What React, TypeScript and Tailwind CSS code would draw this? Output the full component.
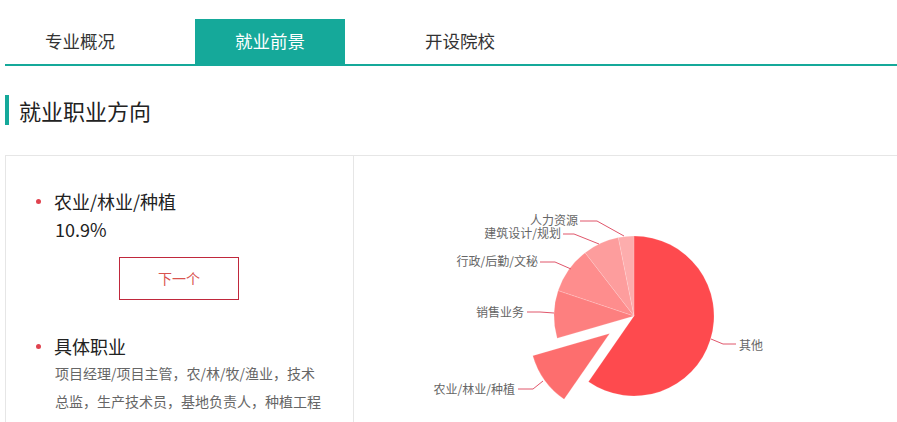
import React from "react";

const font = { fontFamily: '"Microsoft YaHei", "Noto Sans CJK SC", "Noto Sans", sans-serif' };

// pie center / radius in page coords
const CX = 634;
const CY = 316;
const R = 80;

const pt = (deg: number, r: number, ox = 0, oy = 0) => {
  const a = (deg * Math.PI) / 180;
  return [CX + ox + r * Math.sin(a), CY + oy - r * Math.cos(a)];
};

const slicePath = (from: number, to: number, ox = 0, oy = 0) => {
  const [x1, y1] = pt(from, R, ox, oy);
  const [x2, y2] = pt(to, R, ox, oy);
  const large = to - from > 180 ? 1 : 0;
  return `M${CX + ox} ${CY + oy} L${x1} ${y1} A${R} ${R} 0 ${large} 1 ${x2} ${y2} Z`;
};

const slices = [
  { name: "其他", from: 0, to: 214.7, color: "#fe4a4e" },
  { name: "农业/林业/种植", from: 214.7, to: 253.9, color: "#fd6e6e", explode: 30 },
  { name: "销售业务", from: 253.9, to: 288.5, color: "#fd7f7f" },
  { name: "行政/后勤/文秘", from: 288.5, to: 322.3, color: "#fe8d8d" },
  { name: "建筑设计/规划", from: 322.3, to: 348.7, color: "#fd9d9d" },
  { name: "人力资源", from: 348.7, to: 360, color: "#fdadad" },
];

const labels = [
  { text: "人力资源", x: 578, y: 221, anchor: "end", line: "580,221 597,221 624,236" },
  { text: "建筑设计/规划", x: 561, y: 234, anchor: "end", line: "563,234 574,234 599,244" },
  { text: "行政/后勤/文秘", x: 538, y: 262, anchor: "end", line: "540,262 555,262 571,269" },
  { text: "销售业务", x: 524, y: 313, anchor: "end", line: "527,312 540,312 554,313" },
  { text: "农业/林业/种植", x: 515, y: 390, anchor: "end", line: "518,389 533,389 543,381" },
  { text: "其他", x: 739, y: 346, anchor: "start", line: "711,339 723,344 736,344" },
];

const PieChart = () => (
  <svg width={543} height={266} viewBox="354 156 543 266">
    {slices.map((s) => {
      let ox = 0;
      let oy = 0;
      if (s.explode) {
        const mid = ((s.from + s.to) / 2) * (Math.PI / 180);
        ox = s.explode * Math.sin(mid);
        oy = -s.explode * Math.cos(mid);
      }
      return (
        <path key={s.name} d={slicePath(s.from, s.to, ox, oy)} fill={s.color} stroke="#ffffff" strokeOpacity={0.25} strokeWidth={0.6} />
      );
    })}
    {labels.map((l) => (
      <g key={l.text}>
        <polyline points={l.line} fill="none" stroke="#e0566b" strokeWidth={1} />
        <text x={l.x} y={l.y + 4} textAnchor={l.anchor as "end" | "start"} fontSize={12} fill="#666666" style={font}>
          {l.text}
        </text>
      </g>
    ))}
  </svg>
);

const tabs = ["专业概况", "就业前景", "开设院校"];

export default function App() {
  return (
    <div className="w-[897px] h-[422px] overflow-hidden bg-white text-[#333]" style={font}>
      <div className="pt-[19px] pl-[5px]">
        <div className="flex border-b-2 border-[#15a99a]">
          {tabs.map((t, i) => (
            <div
              key={t}
              className={
                i === 1
                  ? "w-[150px] h-[45px] mr-[40px] flex items-center justify-center text-[17.5px] bg-[#15a99a] text-white"
                  : "w-[150px] h-[45px] mr-[40px] flex items-center justify-center text-[17.5px] text-[#333]"
              }
            >
              {t}
            </div>
          ))}
        </div>
      </div>

      <div className="mt-[29px] ml-[5px] flex items-center">
        <div className="w-[4px] h-[30px] bg-[#15a99a]" />
        <div className="ml-[10px] text-[22px] leading-[30px] text-[#222]">就业职业方向</div>
      </div>

      <div className="mt-[30px] ml-[5px] flex border-t border-l border-[#e6e6e6] h-[300px]">
        <div className="w-[348px] shrink-0 border-r border-[#e6e6e6] pt-[31px]">
          <div className="pl-[30px] flex items-center h-[28px]">
            <span className="w-[5px] h-[5px] rounded-full bg-[#e0434f] mr-[13px]" />
            <span className="text-[18px] text-[#222]">农业/林业/种植</span>
          </div>
          <div className="pl-[49px] h-[28px] leading-[28px] text-[18px] text-[#222]">10.9%</div>
          <button className="ml-[113px] mt-[14px] w-[120px] h-[43px] border border-[#c0283c] text-[14px] text-[#d9534f] flex items-center justify-center">
            下一个
          </button>
          <div className="mt-[32px] pl-[30px] flex items-center h-[28px]">
            <span className="w-[5px] h-[5px] rounded-full bg-[#e0434f] mr-[13px]" />
            <span className="text-[18px] text-[#222]">具体职业</span>
          </div>
          <div className="pl-[49px] -mt-[1px] text-[14px] leading-[28px] text-[#666]">
            <div className="whitespace-nowrap">项目经理/项目主管，农/林/牧/渔业，技术</div>
            <div className="whitespace-nowrap">总监，生产技术员，基地负责人，种植工程</div>
            <div className="whitespace-nowrap">师，农艺师，园艺师，林业技术员，植保员</div>
          </div>
        </div>
        <div className="flex-1">
          <PieChart />
        </div>
      </div>
    </div>
  );
}
